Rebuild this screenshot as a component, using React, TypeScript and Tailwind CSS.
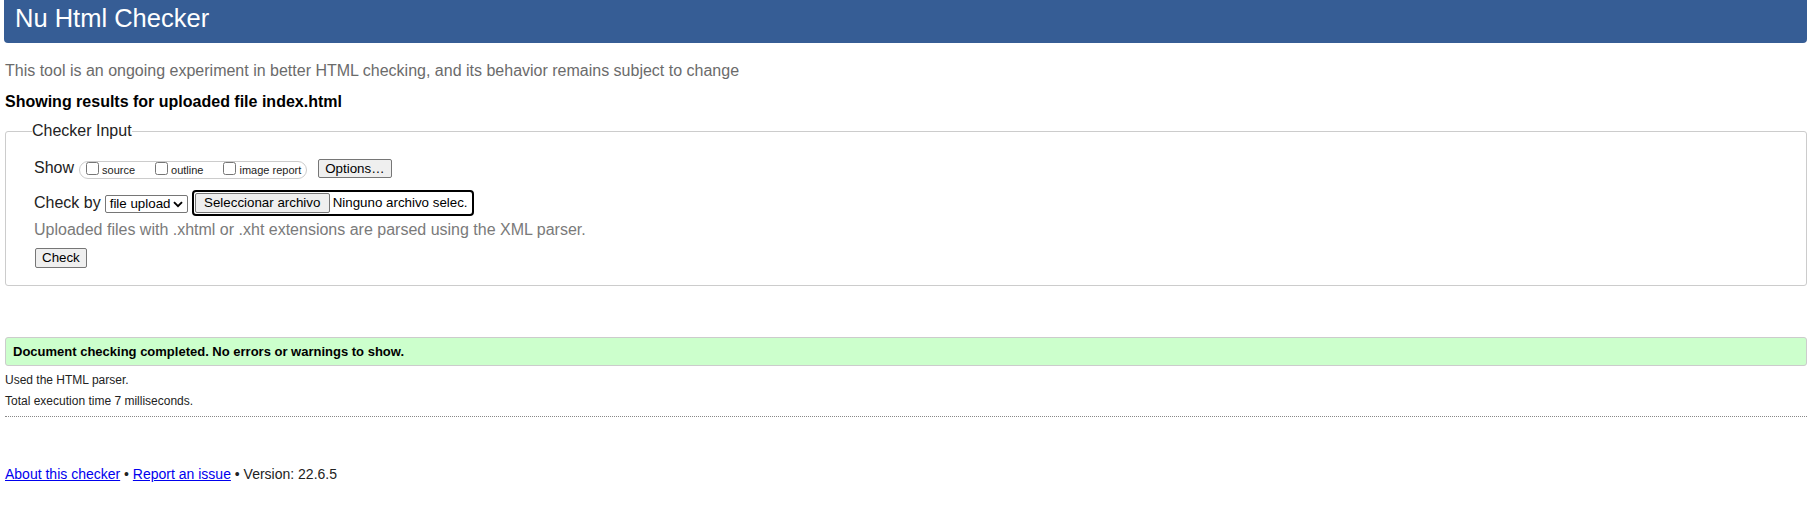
import React from 'react';

const font = { fontFamily: '"Liberation Sans", Arial, sans-serif' };

const Checkbox: React.FC<{ label: string; last?: boolean }> = ({ label, last }) => (
  <label className={`flex items-start ${last ? '' : 'mr-[16px]'}`}>
    <input type="checkbox" className="m-[0_3px_0_4px] h-[13px] w-[13px]" />
    <span className="mt-[2px] text-[11px] leading-[13px]">{label}</span>
  </label>
);

const NativeButton: React.FC<{ children: React.ReactNode; className?: string }> = ({ children, className }) => (
  <button
    type="button"
    className={`flex items-center justify-center rounded-[2px] border border-[#767676] bg-[#efefef] text-[13.33px] leading-none text-black ${className || ''}`}
  >
    {children}
  </button>
);

const App: React.FC = () => {
  return (
    <div className="min-h-[510px] w-full bg-white pl-[5px] pr-[8px] text-[#222]" style={font}>
      {/* Title bar */}
      <div className="-ml-[1px] h-[43px] rounded-b-[4px] bg-[#365d95] pl-[11px] pt-[6px]">
        <h1 className="text-[25.5px] leading-none font-normal text-white">Nu Html Checker</h1>
      </div>

      <p className="mt-[19px] text-[16px] leading-[18px] text-[#6b6b6b]">
        This tool is an ongoing experiment in better HTML checking, and its behavior remains subject to change
      </p>
      <p className="mt-[13px] text-[16px] leading-[18px] font-bold text-black">
        Showing results for uploaded file index.html
      </p>

      {/* Checker input form */}
      <fieldset className="mt-[11px] rounded-[3px] border border-[#cccccc] pl-[28px] pb-[17px]">
        <legend className="-ml-[2px] text-[16px] leading-[18px] text-[#222]">Checker Input</legend>

        <div className="mt-[19px] flex h-[20px] items-start">
          <span className="text-[16px] leading-[18px]">Show</span>
          <div className="ml-[5px] mt-[2px] flex h-[18px] items-start rounded-[9px] border border-[#cccccc] pl-[2px] pr-[5px]">
            <Checkbox label="source" />
            <Checkbox label="outline" />
            <Checkbox label="image report" last />
          </div>
          <NativeButton className="ml-[11px] h-[19px] px-[6px]">Options…</NativeButton>
        </div>

        <div className="mt-[11px] flex h-[26px] items-start">
          <span className="mt-[4px] text-[16px] leading-[18px]">Check by</span>
          <div className="ml-[4px] mt-[5px] flex h-[18px] w-[83px] items-center justify-between rounded-[2px] border border-[#767676] pl-[4px] pr-[4px] text-[13.33px] leading-none text-black">
            <span>file upload</span>
            <svg width="10" height="7" viewBox="0 0 10 7" className="mt-[1px]">
              <path d="M1 1.2 L5 5.2 L9 1.2" fill="none" stroke="#000" strokeWidth="1.9" />
            </svg>
          </div>
          <div className="ml-[4px] flex h-[26px] w-[282px] items-center rounded-[4px] border-2 border-black pl-[1px]">
            <NativeButton className="h-[20px] w-[135px]">Seleccionar archivo</NativeButton>
            <span className="ml-[3px] text-[13.33px] leading-none text-black">Ninguno archivo selec.</span>
          </div>
        </div>

        <p className="mt-[5px] text-[16px] leading-[18px] text-[#7a7a7a]">
          Uploaded files with .xhtml or .xht extensions are parsed using the XML parser.
        </p>

        <NativeButton className="ml-[1px] mt-[9px] h-[20px] px-[6px]">Check</NativeButton>
      </fieldset>

      {/* Result */}
      <div className="mt-[51px] flex h-[29px] items-center rounded-[3px] border border-[#cccccc] bg-[#ccffcc] pl-[7px]">
        <span className="text-[13px] font-bold text-black">
          Document checking completed. No errors or warnings to show.
        </span>
      </div>

      <p className="mt-[7px] text-[12px] leading-[14px] text-[#222]">Used the HTML parser.</p>
      <p className="mt-[7px] text-[12px] leading-[14px] text-[#222]">Total execution time 7 milliseconds.</p>

      <hr className="mt-[8px] border-0 border-t border-dotted border-[#888]" />

      {/* Footer */}
      <p className="mt-[49px] text-[14px] leading-[16px] text-[#222]">
        <a href="#" className="text-[#0000ee] underline">About this checker</a>
        {' • '}
        <a href="#" className="text-[#0000ee] underline">Report an issue</a>
        {' • Version: 22.6.5'}
      </p>
    </div>
  );
};

export default App;
